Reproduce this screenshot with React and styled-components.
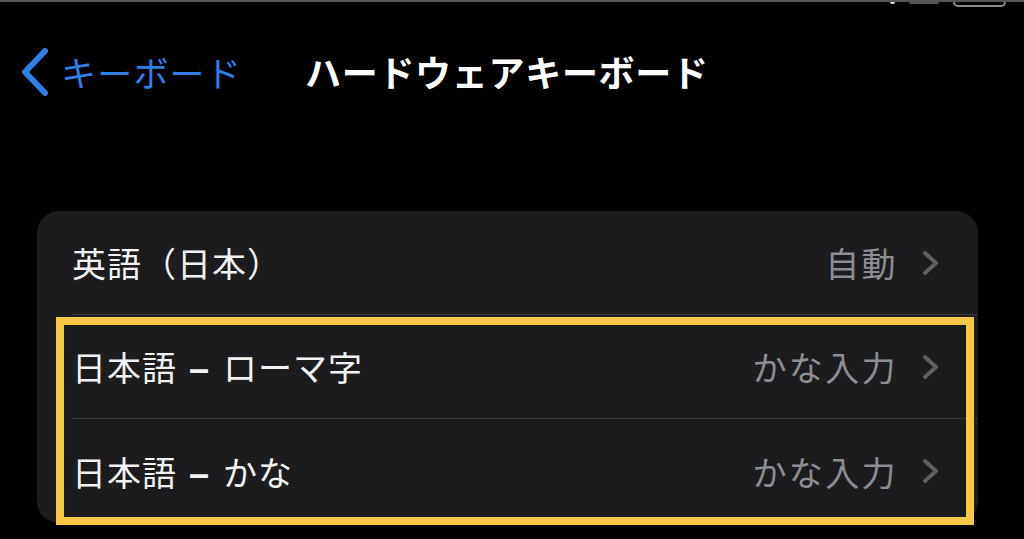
import React from "react";
import styled, { createGlobalStyle } from "styled-components";

const Global = createGlobalStyle`
  html, body { margin: 0; padding: 0; background: #000; }
  body { font-family: "Noto Sans CJK JP", "Noto Sans", sans-serif; color: #fff; }
  * { box-sizing: border-box; }
`;

const Page = styled.div`
  width: 1024px;
  height: 539px;
  overflow: hidden;
  background: #000;
  border-top: 2px solid #555558;
  display: flex;
  flex-direction: column;
  position: relative;
`;

const StatusBar = styled.div`
  position: absolute;
  top: 0;
  right: 18px;
  display: flex;
  align-items: flex-start;
  gap: 14px;
`;

const Dot = styled.span`
  width: ${(p) => p.$w || 4}px;
  height: 2px;
  background: ${(p) => p.$c || "#ddd"};
  border-radius: 0 0 2px 2px;
`;

const Battery = styled.span`
  width: 53px;
  height: 5px;
  border: 2px solid #8a8a8e;
  border-top: none;
  border-radius: 0 0 5px 5px;
`;

const Nav = styled.header`
  height: 140px;
  display: flex;
  align-items: flex-start;
  padding: 45px 0 0 20px;
`;

const Back = styled.div`
  display: flex;
  align-items: center;
  gap: 11px;
  color: #2f7fe6;
  font-size: 35px;
  line-height: 48px;
  letter-spacing: 1.2px;
`;

const Title = styled.h1`
  margin: 0 0 0 63px;
  font-size: 36px;
  line-height: 48px;
  font-weight: 700;
  color: #fff;
  letter-spacing: 0.7px;
`;

const Card = styled.section`
  margin: 69px 0 0 37px;
  width: 941px;
  background: #1c1c1e;
  border-radius: 22px;
  position: relative;
`;

const Row = styled.div`
  padding-left: 35px;
  height: 104px;
`;

const RowInner = styled.div`
  height: 100%;
  display: flex;
  align-items: center;
  padding-right: 38px;
  border-bottom: ${(p) => (p.$last ? "none" : "1px solid #3a3a3c")};
`;

const Label = styled.span`
  flex: 1;
  font-size: 34px;
  color: #f2f2f2;
  margin-left: ${(p) => p.$indent || 0}px;
  letter-spacing: 1px;
  white-space: pre;
`;

const Dash = styled.span`
  font-family: "Liberation Sans", Arial, sans-serif;
  font-size: 36px;
  font-weight: 700;
  letter-spacing: 2px;
  white-space: pre;
`;

const Value = styled.span`
  font-size: 34px;
  color: #8d8d92;
  margin-right: 24px;
  letter-spacing: 2.4px;
`;

const Highlight = styled.div`
  position: absolute;
  left: 19px;
  top: 106px;
  width: 918px;
  height: 208px;
  border: 8px solid #f6c944;
  pointer-events: none;
`;

const Chevron = () => (
  <svg width="18" height="26" viewBox="0 0 18 26">
    <path d="M3 3 L14 13 L3 23" fill="none" stroke="#5f5f64" strokeWidth="4" strokeLinecap="round" strokeLinejoin="round" />
  </svg>
);

const BackChevron = () => (
  <svg width="30" height="50" viewBox="0 0 30 50">
    <path d="M25 4 L5 25 L25 46" fill="none" stroke="#2f7fe6" strokeWidth="6" strokeLinecap="round" strokeLinejoin="round" />
  </svg>
);

const rows = [
  { label: ["英語（日本）"], value: "自動", indent: 0 },
  { label: ["日本語", "ローマ字"], value: "かな入力", indent: 0 },
  { label: ["日本語", "かな"], value: "かな入力", indent: 0, last: true },
];

export default function App() {
  return (
    <>
      <Global />
      <Page>
        <StatusBar>
          <Dot $w={5} />
          <Dot $w={30} $c="#555" />
          <Battery />
        </StatusBar>
        <Nav>
          <Back>
            <BackChevron />
            <span>キーボード</span>
          </Back>
          <Title>ハードウェアキーボード</Title>
        </Nav>
        <Card>
          {rows.map((r) => (
            <Row key={r.label.join("-")}>
              <RowInner $last={r.last}>
                <Label $indent={r.indent}>
                  {r.label[0]}
                  {r.label[1] && (
                    <>
                      <Dash> – </Dash>
                      {r.label[1]}
                    </>
                  )}
                </Label>
                <Value>{r.value}</Value>
                <Chevron />
              </RowInner>
            </Row>
          ))}
          <Highlight />
        </Card>
      </Page>
    </>
  );
}
